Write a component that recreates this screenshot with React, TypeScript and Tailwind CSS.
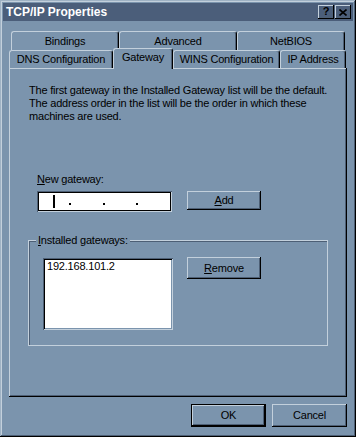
import React from "react";

function Tab({ label, w, selected }: { label: string; w: string; selected?: boolean }) {
  return (
    <div
      className={
        selected
          ? `${w} h-[21px] -mb-px relative z-10 bg-[#7b94ad] flex items-center justify-center pb-[4px] border-t border-l border-[#c3d0dc] border-r border-r-black rounded-t-[3px] shadow-[inset_-1px_0_0_#4d5f75]`
          : `${w} h-full flex items-center justify-center border-t border-l border-[#c3d0dc] border-r border-r-black rounded-t-[3px] shadow-[inset_-1px_0_0_#4d5f75]`
      }
    >
      {label}
    </div>
  );
}

function Button({ children, className }: { children: React.ReactNode; className: string }) {
  return (
    <div
      className={`flex items-center justify-center shadow-[inset_-1px_-1px_0_#000,inset_1px_1px_0_#c3d0dc,inset_-2px_-2px_0_#4d5f75] ${className}`}
    >
      {children}
    </div>
  );
}

export default function App() {
  return (
    <div className="w-[356px] h-[437px] p-[3px] flex flex-col bg-[#7b94ad] text-black text-[11px] leading-[13px] tracking-[-0.2px] font-['Liberation_Sans',Arial,sans-serif] shadow-[inset_-1px_-1px_0_#000,inset_1px_1px_0_#9fb2c4,inset_-2px_-2px_0_#4d5f75,inset_2px_2px_0_#c3d0dc]">
      {/* title bar */}
      <div className="h-[18px] bg-[#4b5e7a] flex items-center pl-[3px] pr-[2px]">
        <span className="text-white font-bold text-[12px] tracking-normal">TCP/IP Properties</span>
        <div className="ml-auto flex">
          <Button className="w-[16px] h-[14px] font-bold text-[11px] leading-none pb-px">?</Button>
          <Button className="w-[16px] h-[14px] ml-px">
            <svg width="8" height="7" viewBox="0 0 8 7">
              <path d="M0.5 0.5 L7.5 6.5 M7.5 0.5 L0.5 6.5" stroke="#000" strokeWidth="1.6" fill="none" />
            </svg>
          </Button>
        </div>
      </div>

      {/* tabs */}
      <div className="mt-[10px] ml-[8px] h-[19px] flex">
        <Tab label="Bindings" w="w-[108px]" />
        <Tab label="Advanced" w="w-[118px]" />
        <Tab label="NetBIOS" w="w-[108px]" />
      </div>
      <div className="ml-[6px] h-[18px] flex items-end">
        <Tab label="DNS Configuration" w="w-[104px]" />
        <Tab label="Gateway" w="w-[60px]" selected />
        <Tab label="WINS Configuration" w="w-[107px]" />
        <Tab label="IP Address" w="w-[66px]" />
      </div>

      {/* panel */}
      <div className="ml-[6px] w-[338px] h-[329px] pt-[16px] shadow-[inset_-1px_-1px_0_#000,inset_1px_1px_0_#c3d0dc,inset_-2px_-2px_0_#4d5f75]">
        <p className="ml-[20px] whitespace-nowrap">
          The first gateway in the Installed Gateway list will be the default.
          <br />
          The address order in the list will be the order in which these
          <br />
          machines are used.
        </p>

        <div className="ml-[28px] mt-[50px]">
          <span className="underline underline-offset-1">N</span>ew gateway:
        </div>
        <div className="ml-[28px] mt-[5px] flex items-start">
          <div className="w-[135px] h-[21px] bg-white flex items-center pl-[16px] shadow-[inset_1px_1px_0_#4d5f75,inset_-1px_-1px_0_#c3d0dc,inset_2px_2px_0_#000,inset_-2px_-2px_0_#000]">
            <div className="w-[2px] h-[13px] bg-black" />
            <div className="ml-[14px] mt-[5px] w-[2px] h-[2px] bg-black" />
            <div className="ml-[32px] mt-[5px] w-[2px] h-[2px] bg-black" />
            <div className="ml-[31px] mt-[5px] w-[2px] h-[2px] bg-black" />
          </div>
          <Button className="ml-[15px] w-[74px] h-[19px]">
            <span>
              <span className="underline underline-offset-1">A</span>dd
            </span>
          </Button>
        </div>

        <div className="ml-[19px] mt-[28px] w-[300px] h-[106px] relative border border-[#c3d0dc] shadow-[inset_1px_1px_0_#4d5f75]">
          <div className="absolute left-[7px] -top-[7px] px-[2px] bg-[#7b94ad]">
            <span className="underline underline-offset-1">I</span>nstalled gateways:
          </div>
          <div className="flex items-start pt-[16px] pl-[14px]">
            <div className="w-[130px] h-[72px] mt-px bg-white pl-[4px] pt-[2px] shadow-[inset_1px_1px_0_#4d5f75,inset_-1px_-1px_0_#c3d0dc,inset_2px_2px_0_#000,inset_-2px_-2px_0_#7b94ad]">
              192.168.101.2
            </div>
            <Button className="ml-[14px] w-[74px] h-[22px]">
              <span>
                <span className="underline underline-offset-1">R</span>emove
              </span>
            </Button>
          </div>
        </div>
      </div>

      {/* bottom buttons */}
      <div className="mt-[7px] mr-[6px] flex justify-end gap-[6px]">
        <Button className="w-[75px] h-[23px] border border-black">OK</Button>
        <Button className="w-[75px] h-[23px]">Cancel</Button>
      </div>
    </div>
  );
}
